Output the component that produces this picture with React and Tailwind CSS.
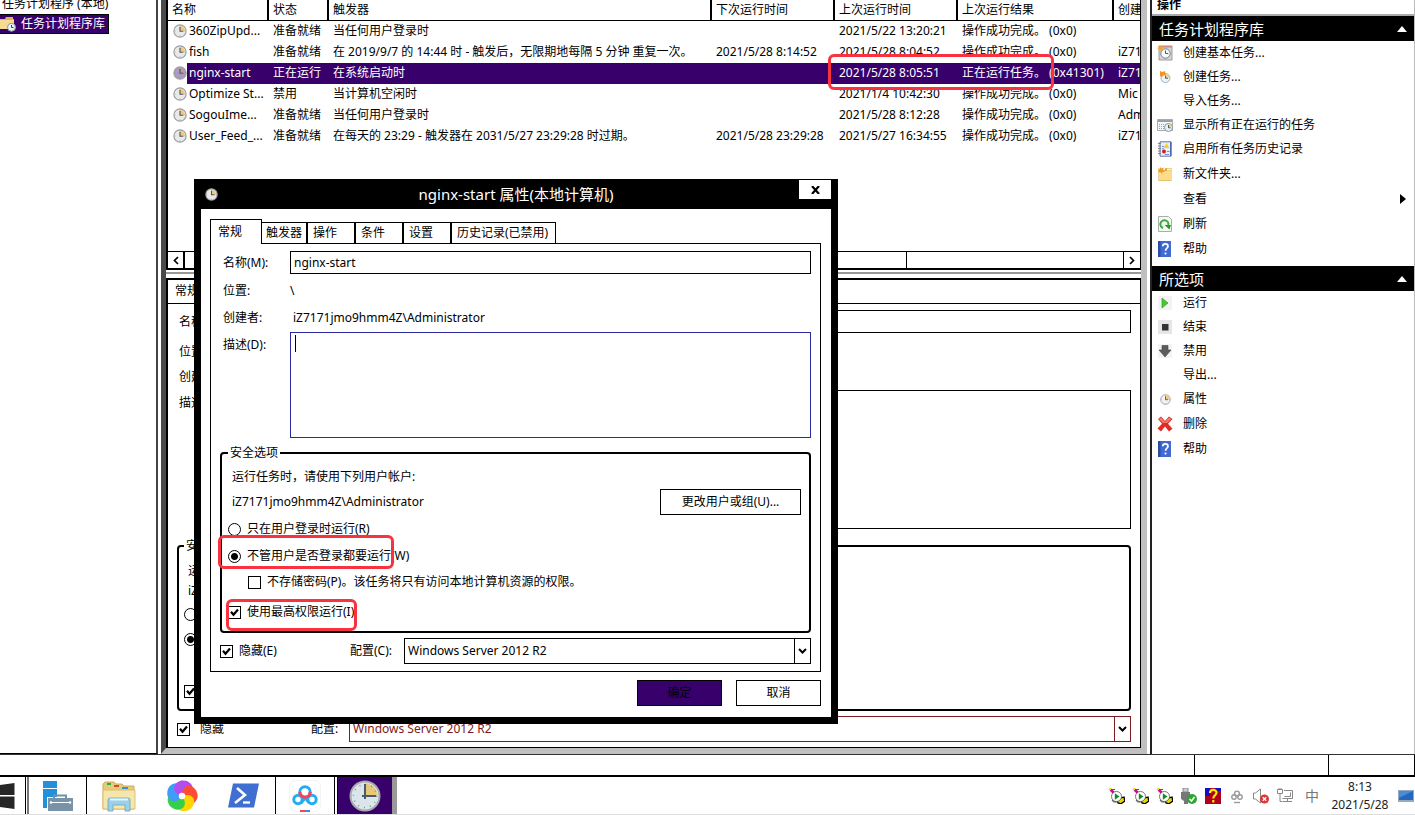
import React from "react";

function ClockIcon({ size = 14, tint = "#e9e9ea", wedge = "#f3c877" }) {
  return (
    <svg width={size} height={size} viewBox="0 0 16 16" className="shrink-0">
      <circle cx="8" cy="8" r="7" fill={tint} stroke="#9c9ea2" strokeWidth="1.3" />
      <path d="M8 8V2.4A5.6 5.6 0 0 1 13.6 8z" fill={wedge} />
      <path d="M8 3.4V8.3h3.8" fill="none" stroke="#4f5860" strokeWidth="1.3" />
      <path d="M8 1.8v1M8 13.2v1M1.8 8h1M13.2 8h1" stroke="#8a9098" strokeWidth=".8" />
    </svg>
  );
}

function FolderClock() {
  return (
    <svg width="16" height="16" viewBox="0 0 16 16" className="shrink-0">
      <path d="M0 3h5l1-2h7v2h1v10H0z" fill="#dfb65c" />
      <path d="M0 4h14v9H0z" fill="#f6dc90" />
      <circle cx="11.5" cy="11.3" r="4" fill="#eef2f6" stroke="#8794a3" />
      <path d="M11.5 9v2.5h2" fill="none" stroke="#345" />
    </svg>
  );
}

function BasicTaskIcon() {
  return (
    <svg width="16" height="16" viewBox="0 0 16 16">
      <path d="M2 1h13v14H2z" fill="#d9d4d0" stroke="#a39c98" />
      <path d="M2 1h13v1.500H2z" fill="#c98a80" />
      <circle cx="8.500" cy="8.500" r="4.700" fill="#f7fafc" stroke="#6d8494" />
      <path d="M8.500 5.500v3h2.800" fill="none" stroke="#425c6c" />
      <path d="M3 0l1 2 2-1-1 2 2 1-2 .6.6 2L4 5.400 2.500 7l.2-2.400L0 4l2-1L.5 1l2.200.8z" fill="#f6a52c" />
    </svg>
  );
}

function NewTaskIcon() {
  return (
    <svg width="16" height="16" viewBox="0 0 16 16">
      <circle cx="8.500" cy="9" r="4.500" fill="#edf4fa" stroke="#9db2c5" />
      <path d="M8.500 9V5A4 4 0 0 1 12.500 9z" fill="#f1cf84" />
      <path d="M8.500 6.500V9.300h2.500" fill="none" stroke="#4c6376" />
      <path d="M3 2l2.500 1 2.500-1 1 5-2-1-2 2-2-1z" fill="#f3961d" />
    </svg>
  );
}

function RunningIcon() {
  return (
    <svg width="16" height="16" viewBox="0 0 16 16">
      <path d="M.5 2.500h15v11H.5z" fill="#f3f4f5" stroke="#a7acb1" />
      <path d="M1 3h14v2H1z" fill="#9aa0a6" />
      <path d="M2 7.500h6M2 9.500h5M2 11.500h5" stroke="#9da3a8" strokeDasharray="1 1" />
      <circle cx="11.500" cy="10.500" r="4" fill="#eaf1f6" stroke="#8298a8" />
      <path d="M11.500 10.500V7a3.500 3.500 0 0 1 3.500 3.500z" fill="#f0d08b" />
      <path d="M11.500 8v2.800h2" fill="none" stroke="#435a6a" />
    </svg>
  );
}

function HistoryIcon() {
  return (
    <svg width="16" height="16" viewBox="0 0 16 16">
      <path d="M3 .8h11v14.400H3z" fill="#e8eefa" stroke="#5e77a8" />
      <path d="M13 1h1.500v14H13z" fill="#4a6bb0" />
      <path d="M1 2.500h3M1 5h3M1 7.500h3M1 10h3M1 12.500h3" stroke="#7a828e" />
      <path d="M9.500 2l2.800 5H6.800z" fill="#f7cf1e" />
      <path d="M5 5.500h2M5 7.800h2M8 13.500h4M10 10.500h2.500" stroke="#6f8fd0" />
      <circle cx="7" cy="10.500" r="2" fill="#cf2323" />
    </svg>
  );
}

function NewFolderIcon() {
  return (
    <svg width="16" height="16" viewBox="0 0 16 16">
      <path d="M1.500 4h6l1-2h6v13h-13z" fill="#d9aa45" />
      <path d="M2 5h13v9.500H2z" fill="#f9dc8c" />
      <path d="M10 2.500h4v2h-4z" fill="#fff4d0" />
      <path d="M3 1l1.500 1.500L7 1.500 6 4l2 1.500-2.500.5L5 8 3.500 6 1 6.500 2 4 .5 2.500l2.500.3z" fill="#f49a1d" />
    </svg>
  );
}

function RefreshIcon() {
  return (
    <svg width="16" height="16" viewBox="0 0 16 16">
      <path d="M1.500.5h10l3 3v12h-13z" fill="#f6f8f6" stroke="#a9adab" />
      <path d="M6 12A4 4 0 1 1 11.300 9" fill="none" stroke="#36ab35" strokeWidth="2" />
      <path d="M7.500 9h6.500l-1.500 4.500z" fill="#249b28" />
    </svg>
  );
}

function HelpIcon() {
  return (
    <svg width="16" height="16" viewBox="0 0 16 16">
      <path d="M1 0h13v16H1z" fill="#426bd0" />
      <path d="M1 0h2.500v16H1z" fill="#2a4da6" />
      <path d="M5.800 5.200c0-3.200 5.200-3.200 5.200 0 0 2-2.400 2-2.400 4.600" fill="none" stroke="#fff" strokeWidth="1.700" />
      <circle cx="8.500" cy="12.500" r="1.100" fill="#fff" />
    </svg>
  );
}

function RunIcon() {
  return (
    <svg width="16" height="16" viewBox="0 0 16 16">
      <path d="M1 1h14v14H1z" fill="#f3f3f3" />
      <path d="M5 3l6 5-6 5z" fill="#4fc436" stroke="#30a12a" strokeWidth=".7" />
    </svg>
  );
}

function EndIcon() {
  return (
    <svg width="16" height="16" viewBox="0 0 16 16">
      <path d="M1 1h14v14H1z" fill="#e6e6e6" />
      <path d="M5 5h6.500v6.500H5z" fill="#333" />
    </svg>
  );
}

function DisableIcon() {
  return (
    <svg width="16" height="16" viewBox="0 0 16 16">
      <path d="M1 1h14v14H1z" fill="#f3f3f3" />
      <path d="M5 2.500h6V7h3l-6 7-6-7h3z" fill="#5c5c5c" stroke="#444" strokeWidth=".6" />
    </svg>
  );
}

function DeleteIcon() {
  return (
    <svg width="16" height="16" viewBox="0 0 16 16">
      <path d="M1 3l3-2.500L8 5l4-4.500L15.500 3 11 7.800l4.500 5L12 15.500l-4-5-4 5-3.500-3L5 7.800z" fill="#e32b22" />
      <path d="M1.800 3L4 1.400 8 6l4-4.600L14.300 3 10 7H6z" fill="#f2796d" />
    </svg>
  );
}

function Chevron() {
  return (
    <svg width="9" height="6" viewBox="0 0 9 6">
      <path d="M1 1l3.500 3.500L8 1" fill="none" stroke="#000" strokeWidth="2" />
    </svg>
  );
}

function Tick({ id, label, checked, className = "", gap = "gap-1.5" }) {
  return (
    <div className={`flex items-center ${gap} ${className}`}>
      <span className="relative block size-[13px] shrink-0">
        <input
          id={id}
          type="checkbox"
          defaultChecked={checked}
          className="peer block size-[13px] appearance-none border border-black bg-white"
        />
        <svg
          viewBox="0 0 13 13"
          className="pointer-events-none absolute inset-0 hidden size-[13px] peer-checked:block"
        >
          <path d="M3 5.800l2.500 3L10 3.500" fill="none" stroke="#000" strokeWidth="2.200" />
        </svg>
      </span>
      <label htmlFor={id} className="whitespace-nowrap">
        {label}
      </label>
    </div>
  );
}

function Radio({ id, name, label, checked, className = "" }) {
  return (
    <div className={`flex items-center gap-1.5 ${className}`}>
      <input
        id={id}
        name={name}
        type="radio"
        defaultChecked={checked}
        className="size-[13px] shrink-0 appearance-none rounded-full border border-black bg-white checked:bg-[radial-gradient(circle,#000_3px,#fff_4px)]"
      />
      <label htmlFor={id} className="whitespace-nowrap">
        {label}
      </label>
    </div>
  );
}

function Combo({ id, tone = "border-black", text = "text-black" }) {
  return (
    <div className={`relative flex h-[26px] flex-1 border ${tone}`}>
      <select id={id} className={`w-full appearance-none bg-white pl-[3px] outline-none ${text}`}>
        <option>Windows Server 2012 R2</option>
      </select>
      <span
        className={`pointer-events-none absolute inset-y-0 right-0 grid w-4 place-items-center border-l bg-white ${tone}`}
      >
        <Chevron />
      </span>
    </div>
  );
}

const tasks = [
  ["360ZipUpd...", "准备就绪", "当任何用户登录时", "", "2021/5/22 13:20:21", "操作成功完成。 (0x0)", ""],
  ["fish", "准备就绪", "在 2019/9/7 的 14:44 时 - 触发后，无限期地每隔 5 分钟 重复一次。", "2021/5/28 8:14:52", "2021/5/28 8:04:52", "操作成功完成。 (0x0)", "iZ71"],
  ["nginx-start", "正在运行", "在系统启动时", "", "2021/5/28 8:05:51", "正在运行任务。 (0x41301)", "iZ71"],
  ["Optimize St...", "禁用", "当计算机空闲时", "", "2021/1/4 10:42:30", "操作成功完成。 (0x0)", "Mic"],
  ["SogouIme...", "准备就绪", "当任何用户登录时", "", "2021/5/28 8:12:28", "操作成功完成。 (0x0)", "Adm"],
  ["User_Feed_...", "准备就绪", "在每天的 23:29 - 触发器在 2031/5/27 23:29:28 时过期。", "2021/5/28 23:29:28", "2021/5/27 16:34:55", "操作成功完成。 (0x0)", "iZ71"],
];

const headings = ["名称", "状态", "触发器", "下次运行时间", "上次运行时间", "上次运行结果", "创建"];

function TaskList() {
  return (
    <section className="flex h-[270px] flex-col border-r border-b-2 border-l-2 border-black bg-white">
      <div className="flex-1 overflow-hidden">
        <table className="w-full table-fixed border-collapse text-left whitespace-nowrap">
          <colgroup>
            <col className="w-[100px]" />
            <col className="w-[60px]" />
            <col className="w-[383px]" />
            <col className="w-[123px]" />
            <col className="w-[123px]" />
            <col className="w-[156px]" />
            <col />
          </colgroup>
          <thead>
            <tr className="h-5 border-b border-black">
              {headings.map((h, i) => (
                <th
                  key={h}
                  className={`overflow-hidden py-0 pr-0 pl-1 font-normal ${i < 6 ? "border-r-2 border-black" : ""}`}
                >
                  {h}
                </th>
              ))}
            </tr>
          </thead>
          <tbody>
            {tasks.map((row, r) => {
              const on = r === 2;
              return (
                <tr key={row[0]} className={`h-[21px] ${on ? "text-white" : ""}`}>
                  {row.map((cell, i) =>
                    i === 0 ? (
                      <td key={i} className="overflow-hidden p-0">
                        <div className="flex h-[21px] items-center pl-[5px]">
                          <ClockIcon
                            tint={on ? "#a99bc4" : "#e9e9ea"}
                            wedge={on ? "#c09a9c" : "#f3c877"}
                          />
                          <span
                            className={`flex h-full flex-1 items-center pl-0.5 ${on ? "bg-[#38006b]" : ""}`}
                          >
                            {cell}
                          </span>
                        </div>
                      </td>
                    ) : (
                      <td
                        key={i}
                        className={`overflow-hidden py-0 pr-0 pl-[5px] ${on ? "bg-[#38006b]" : ""}`}
                      >
                        {cell}
                      </td>
                    )
                  )}
                </tr>
              );
            })}
          </tbody>
        </table>
      </div>
      <div className="flex h-[17px] border-t border-black">
        <button aria-label="向左滚动" className="grid w-[17px] place-items-center border-r-2 border-black">
          <svg width="6" height="9" viewBox="0 0 6 9">
            <path d="M5 1L1.500 4.500 5 8" fill="none" stroke="#000" strokeWidth="1.700" />
          </svg>
        </button>
        <div className="flex flex-1">
          <div className="w-[77%] border-r border-black" />
        </div>
        <button aria-label="向右滚动" className="grid w-[17px] place-items-center border-l border-black">
          <svg width="6" height="9" viewBox="0 0 6 9">
            <path d="M1 1l3.500 3.500L1 8" fill="none" stroke="#000" strokeWidth="1.700" />
          </svg>
        </button>
      </div>
    </section>
  );
}

function Details() {
  return (
    <section className="flex flex-1 flex-col border-t-2 border-r border-b border-l-2 border-black bg-white">
      <div className="h-[23px] pt-0.5 pl-[7px]">常规</div>
      <div className="flex-1 border-t border-black pt-1.5 pr-[9px] pl-[9px]">
        <div className="flex h-[23px] items-center">
          <label htmlFor="d-name" className="w-28 pl-0.5">名称:</label>
          <input id="d-name" readOnly className="h-full flex-1 border border-black px-1 outline-none" />
        </div>
        <div className="mt-[7px] flex h-6 items-center pl-0.5">位置:</div>
        <div className="flex h-[26px] items-center pl-0.5">创建者:</div>
        <div className="flex h-[139px]">
          <label htmlFor="d-desc" className="w-28 pt-1 pl-0.5">描述:</label>
          <textarea id="d-desc" readOnly className="h-full flex-1 resize-none border border-black outline-none" />
        </div>
        <fieldset className="mt-[9px] h-[173px] rounded border-2 border-black pl-[9px]">
          <legend className="-ml-1 h-4 px-0.5 leading-4">安全选项</legend>
          <div className="flex h-[26px] items-end">运行任务时，请使用下列用户帐户:</div>
          <div className="flex h-[22px] items-center">iZ7171jmo9hmm4Z\Administrator</div>
          <Radio id="d-r1" name="d-logon" label="只在用户登录时运行" className="-ml-1 h-6" />
          <Radio id="d-r2" name="d-logon" label="不管用户是否登录都要运行" checked className="-ml-1 h-[26px]" />
          <Tick id="d-pw" label="不存储密码" className="ml-4 h-6" />
          <Tick id="d-hi" label="使用最高权限运行" checked className="-ml-1 h-[30px]" />
        </fieldset>
        <div className="mt-[5px] mb-1 flex items-center">
          <Tick id="d-hide" label="隐藏" checked gap="gap-2.5" className="w-[134px]" />
          <label htmlFor="d-conf" className="w-[38px]">配置:</label>
          <Combo id="d-conf" tone="border-[#7b1c22]" text="text-[#7b1c22]" />
        </div>
      </div>
    </section>
  );
}

function Action({ icon, children, tall, arrow }) {
  return (
    <button className={`flex w-full items-center pl-[5px] text-left ${tall ? "h-[25px]" : "h-6"}`}>
      <span className="mr-[10px] grid size-4 place-items-center">{icon}</span>
      <span className="flex-1">{children}</span>
      {arrow && (
        <svg width="6" height="10" viewBox="0 0 6 10" className="mr-2">
          <path d="M0 0l6 5-6 5z" />
        </svg>
      )}
    </button>
  );
}

function ActionHeader({ children }) {
  return (
    <h2 className="flex h-[25px] items-center justify-between bg-black pr-[7px] pl-[7px] text-[15px] text-white">
      {children}
      <svg width="10" height="6" viewBox="0 0 10 6">
        <path d="M0 6l5-6 5 6z" fill="#fff" />
      </svg>
    </h2>
  );
}

function Actions() {
  return (
    <aside className="w-[265px] shrink-0 overflow-hidden border-r border-l-2 border-r-[#bbb] border-l-[#222] bg-white">
      <div className="flex h-4 items-end border-b-2 border-[#aaa] pl-[5px] leading-[18px] font-bold">操作</div>
      <ActionHeader>任务计划程序库</ActionHeader>
      <Action icon={<BasicTaskIcon />}>创建基本任务...</Action>
      <Action icon={<NewTaskIcon />}>创建任务...</Action>
      <Action>导入任务...</Action>
      <Action icon={<RunningIcon />}>显示所有正在运行的任务</Action>
      <Action icon={<HistoryIcon />}>启用所有任务历史记录</Action>
      <Action tall icon={<NewFolderIcon />}>新文件夹...</Action>
      <Action tall arrow>查看</Action>
      <Action tall icon={<RefreshIcon />}>刷新</Action>
      <Action tall icon={<HelpIcon />}>帮助</Action>
      <div className="mt-[5px]">
        <ActionHeader>所选项</ActionHeader>
      </div>
      <Action icon={<RunIcon />}>运行</Action>
      <Action icon={<EndIcon />}>结束</Action>
      <Action icon={<DisableIcon />}>禁用</Action>
      <Action>导出...</Action>
      <Action icon={<ClockIcon size={11} tint="#eef3f8" />}>属性</Action>
      <Action tall icon={<DeleteIcon />}>删除</Action>
      <Action tall icon={<HelpIcon />}>帮助</Action>
    </aside>
  );
}

function Dialog() {
  return (
    <div
      role="dialog"
      aria-labelledby="dialog-title"
      className="absolute top-[179px] left-[194px] w-[644px] border-x-[7px] border-b-[7px] border-black bg-white"
    >
      <div className="flex h-[30px] items-center bg-black text-white">
        <span className="flex w-8 pl-1">
          <ClockIcon size={13} />
        </span>
        <h1 id="dialog-title" className="flex-1 text-center text-[15px]">
          nginx-start 属性(本地计算机)
        </h1>
        <button aria-label="关闭" className="mt-px grid h-[19px] w-8 place-items-center self-start bg-white">
          <svg width="9" height="8" viewBox="0 0 9 8">
            <path d="M1 0l7 8M8 0L1 8" stroke="#000" strokeWidth="2.200" />
          </svg>
        </button>
      </div>
      <div className="pt-2.5 pr-2.5 pb-[11px] pl-[9px]">
        <div role="tablist" className="relative z-10 flex h-[25px] items-end">
          <button role="tab" aria-selected="true" className="h-full w-[52px] border border-b-0 border-black bg-white pl-[7px] text-left">
            常规
          </button>
          {[["触发器", "w-[46px] pl-1"], ["操作", "w-12 pl-[5px]"], ["条件", "w-12 pl-[5px]"], ["设置", "w-12 pl-[5px]"], ["历史记录(已禁用)", "w-[104px] pl-[5px]"]].map(
            ([t, c]) => (
              <button
                key={t}
                role="tab"
                className={`h-[22px] border-y border-r-2 border-black text-left whitespace-nowrap last:border-r ${c}`}
              >
                {t}
              </button>
            )
          )}
        </div>
        <div className="-mt-px border border-black px-[9px] pt-[7px] pb-[7px]">
          <div className="flex h-[23px] items-center">
            <label htmlFor="name" className="w-[70px] pl-[3px]">名称(M):</label>
            <input id="name" defaultValue="nginx-start" className="h-full flex-1 border border-black px-[3px] outline-none" />
          </div>
          <div className="mt-1 flex h-[26px] items-center">
            <span className="w-[70px] pl-[3px]">位置:</span>
            <span>\</span>
          </div>
          <div className="flex h-7 items-center">
            <span className="w-[73px] pl-[3px]">创建者:</span>
            <span>iZ7171jmo9hmm4Z\Administrator</span>
          </div>
          <div className="flex h-[106px]">
            <label htmlFor="desc" className="w-[70px] pt-1 pl-[3px]">描述(D):</label>
            <div className="relative flex-1">
              <textarea id="desc" className="block size-full resize-none border border-[#2a2aa0] px-1 py-0.5 outline-none" />
              <span className="absolute top-[3px] left-[5px] h-[17px] w-px bg-black" />
            </div>
          </div>
          <fieldset className="mt-[7px] h-[188px] rounded border-2 border-black pr-2 pl-1.5">
            <legend className="h-4 px-0.5 leading-4">安全选项</legend>
            <div className="mt-1 flex h-6 items-center pl-1">运行任务时，请使用下列用户帐户:</div>
            <div className="flex h-[26px] items-center justify-between pl-1">
              <span>iZ7171jmo9hmm4Z\Administrator</span>
              <button className="h-full w-[141px] border border-black">更改用户或组(U)...</button>
            </div>
            <Radio id="r1" name="logon" label="只在用户登录时运行(R)" className="h-7" />
            <Radio id="r2" name="logon" label="不管用户是否登录都要运行(W)" checked className="h-[26px]" />
            <Tick id="pw" label="不存储密码(P)。该任务将只有访问本地计算机资源的权限。" className="ml-5 h-[26px]" />
            <Tick id="hi" label="使用最高权限运行(I)" checked className="mt-1 h-[26px]" />
          </fieldset>
          <div className="mt-[5px] flex items-center">
            <Tick id="hide" label="隐藏(E)" checked className="w-[130px]" />
            <label htmlFor="conf" className="w-[54px]">配置(C):</label>
            <Combo id="conf" />
          </div>
        </div>
        <div className="mt-2 flex justify-end gap-3.5">
          <button className="h-[26px] w-[85px] border border-black bg-[#38006b]">确定</button>
          <button className="h-[26px] w-[85px] border border-black">取消</button>
        </div>
      </div>
    </div>
  );
}

function TrayApp() {
  return (
    <svg width="16" height="16" viewBox="0 0 16 16">
      <path d="M8 12l3-2 4-1 .8 4-3.800 2.800L9 15z" fill="#e8d800" stroke="#000" strokeWidth="1.300" />
      <circle cx="7.500" cy="8.500" r="5" fill="#fff" stroke="#555" strokeWidth=".8" />
      <path d="M5.800 5.200l4.700 3.300-4.700 3.300z" fill="#128a26" />
      <path d="M1.500 1.500l3 3" stroke="#c0147a" strokeWidth="2.600" />
      <path d="M3 1.500h3" stroke="#d81b60" strokeWidth="1" />
      <path d="M0 0h2v2H0z" fill="#f1e400" />
      <path d="M3 12l1.500 2h3" fill="none" stroke="#222" strokeWidth=".8" />
    </svg>
  );
}

function TaskButton({ label, className = "", children }) {
  return (
    <button aria-label={label} className={`grid shrink-0 place-items-center ${className}`}>
      {children}
    </button>
  );
}

const petals = ["#b44df0", "#ff4d33", "#ffd500", "#35d04a", "#3f9df8"];

function Taskbar() {
  return (
    <footer className="flex h-[38px] items-stretch border-b border-[#ddd] bg-white">
      <TaskButton label="开始" className="w-[26px] justify-items-start border-r border-black">
        <svg width="15" height="26" viewBox="0 0 15 26">
          <path d="M0 2l14.500-2v12H0zM0 13.500h14.500V26L0 24z" fill="#262626" />
        </svg>
      </TaskButton>
      <TaskButton label="服务器管理器" className="ml-px w-[60px] border-r border-l-2 border-r-black border-l-[#777]">
        <svg width="32" height="32" viewBox="0 0 32 32">
          <path d="M1 1h14v7H1zM1 9h14v19H1z" fill="#2390dc" />
          <path d="M5 17h27v14H5z" fill="#fff" />
          <path d="M12 18v-2.500h12V18" fill="none" stroke="#7590a5" strokeWidth="2" />
          <path d="M6 18h25v13H6z" fill="#7893a8" />
          <path d="M8 22.500h21" stroke="#fff" />
          <circle cx="9" cy="22.500" r="1.300" fill="#fff" />
          <circle cx="28" cy="22.500" r="1.300" fill="#fff" />
        </svg>
      </TaskButton>
      <TaskButton label="文件资源管理器" className="w-[64px]">
        <svg width="34" height="32" viewBox="0 0 34 32">
          <path d="M1 4l2-2h9l2 2h6l2 2h10v23H1z" fill="#e6cb7c" stroke="#c2a04c" strokeWidth=".8" />
          <path d="M5 3h4v2H5z" fill="#23b431" />
          <path d="M12 5h5v2h-5z" fill="#d44a2e" />
          <path d="M20 7h6v2h-6z" fill="#3a90dd" />
          <path d="M1 10h32v19H1z" fill="#f7e6a9" stroke="#d5b562" strokeWidth=".8" />
          <path d="M6 31V20q0-2 2-2h18q2 0 2 2v11h-5v-6H11v6z" fill="#9bd0ea" stroke="#68a3c4" strokeWidth=".8" />
          <path d="M8 19.500h18" stroke="#e4f6ff" strokeWidth="2" />
        </svg>
      </TaskButton>
      <TaskButton label="浏览器" className="w-[61px]">
        <svg width="32" height="32" viewBox="-16 -16 32 32">
          <circle r="10" fill="#3f9df8" />
          {petals.map((c, i) => (
            <path
              key={c}
              d="M0 0C-5-1-10-6-7-11-4-16 4-17 8-13 11-10 11-8 10-6 6-8 2-6 0 0z"
              fill={c}
              transform={`rotate(${i * 72})`}
            />
          ))}
          <path d="M0 0C-5-1-10-6-7-11-5-14-2-15.500 1-15.500-3-11-3-5 0 0z" fill="#b44df0" />
          <circle r="3.200" fill="#fff" />
        </svg>
      </TaskButton>
      <TaskButton label="PowerShell" className="w-[64px] border-r border-black">
        <svg width="31" height="25" viewBox="0 0 31 25">
          <path d="M5 .5h26L26 24.500H0z" fill="#3f6fd0" />
          <path d="M9 5l8 7-10 8" fill="none" stroke="#fff" strokeWidth="2.600" />
          <path d="M15 19.500h7" stroke="#fff" strokeWidth="2.300" />
        </svg>
      </TaskButton>
      <TaskButton label="网盘" className="w-[59px] border-r border-black">
        <svg width="32" height="34" viewBox="0 0 32 34">
          <rect x=".5" y="1.500" width="31" height="31" rx="6" fill="#fff" stroke="#f3f3f3" />
          <circle cx="9" cy="20.500" r="4.200" fill="none" stroke="#22aef5" strokeWidth="3" />
          <circle cx="23" cy="20.500" r="4.200" fill="none" stroke="#22aef5" strokeWidth="3" />
          <path d="M11.500 24.500L17 18" stroke="#22aef5" strokeWidth="3" />
          <path d="M20 23.500L15.500 18" stroke="#22aef5" strokeWidth="3" />
          <circle cx="16" cy="13" r="5.200" fill="none" stroke="#22aef5" strokeWidth="3" />
          <path d="M10.800 13a5.200 5.200 0 0 0 10.400 0" fill="none" stroke="#f0465a" strokeWidth="3" />
          <path d="M11 32h5" stroke="#f0465a" strokeWidth="2" />
          <path d="M16 32h5" stroke="#3b8af0" strokeWidth="2" />
        </svg>
      </TaskButton>
      <TaskButton label="任务计划程序" className="ml-0.5 w-[60px] border-r-[5px] border-l border-r-[#999] border-l-black bg-[#38006b]">
        <svg width="32" height="32" viewBox="0 0 32 32">
          <circle cx="16" cy="16" r="14.500" fill="#dbe5ec" stroke="#a8aaac" strokeWidth="2" />
          <path d="M16 16V3.500A12.500 12.500 0 0 1 28.500 16z" fill="#e9c779" />
          <circle cx="16" cy="16" r="11.500" fill="none" stroke="#7f93a3" strokeWidth="1.500" strokeDasharray="1 5.020" />
          <path d="M16 4v15M13 16h14" stroke="#4a5a66" strokeWidth="2" />
        </svg>
      </TaskButton>
      <div className="ml-auto flex items-center gap-2">
        <TrayApp />
        <TrayApp />
        <TrayApp />
        <svg width="16" height="16" viewBox="0 0 16 16">
          <path d="M2 0h5v4H2z" fill="#ccc" stroke="#888" />
          <path d="M0 4h9v7l-2 2v3H3v-3l-3-2z" fill="#777" />
          <circle cx="11" cy="11" r="5" fill="#2ea636" />
          <path d="M8.500 11l2 2 3-4" fill="none" stroke="#fff" strokeWidth="1.500" />
        </svg>
        <svg width="16" height="16" viewBox="0 0 16 16">
          <path d="M0 0h16v16H0z" fill="#b1001c" />
          <path d="M0 0h5v8H0zM10 0h6v3h-6z" fill="#1010c8" />
          <path d="M5 5c0-4 6.500-4 6.500-.5C11.500 7.500 8.300 7 8.300 10.500M8.300 12v2.500" fill="none" stroke="#ffea00" strokeWidth="2.200" />
        </svg>
        <svg width="16" height="16" viewBox="0 0 16 16" fill="none" stroke="#999" strokeWidth="1.400">
          <circle cx="5" cy="9" r="2.200" />
          <circle cx="11" cy="9" r="2.200" />
          <circle cx="8" cy="5.500" r="2.400" />
          <path d="M5 14.500h6" />
        </svg>
        <svg width="16" height="16" viewBox="0 0 16 16" fill="none" stroke="#888">
          <path d="M.5 5h2l5-4v14l-5-4h-2z" />
          <circle cx="11.500" cy="11" r="4.500" fill="#df3535" stroke="none" />
          <path d="M9.800 9.300l3.400 3.400M13.200 9.300l-3.400 3.400" stroke="#fff" strokeWidth="1.300" />
        </svg>
        <svg width="16" height="16" viewBox="0 0 16 16" fill="none" stroke="#888">
          <path d="M7 2.500h8.500v8H5.500M10.500 10.500v3M6 13.500h9M13.500 4.500v4h-6" />
          <path d="M.5 1.500h5v4h-5zM3 5.500v8h2.500M2 0v1.500M4 0v1.500" />
        </svg>
        <span className="ml-1 text-[14px] leading-4 text-[#777]">中</span>
        <time className="ml-[3px] flex w-[60px] flex-col text-center leading-[18px] text-[#222]">
          <span>8:13</span>
          <span>2021/5/28</span>
        </time>
        <svg width="16" height="12" viewBox="0 0 16 12" className="mr-px">
          <path d="M0 0h16v12H0z" fill="#96a9bd" />
          <path d="M1 1h14v9H1z" fill="#2467bd" />
          <path d="M1 1h14L1 8z" fill="#498cdb" />
        </svg>
      </div>
    </footer>
  );
}

export default function App() {
  return (
    <div className="relative flex min-h-screen flex-col overflow-hidden bg-white font-['Noto_Sans','Noto_Sans_CJK_SC',sans-serif] text-[12px] leading-[18px] text-black">
      <main className="flex flex-1">
        <nav className="w-[158px] shrink-0 overflow-hidden border-r-2 border-b border-r-[#444] border-b-black">
          <div className="-mt-1 h-[18px] pl-0.5 leading-4">任务计划程序 (本地)</div>
          <a href="#library" className="inline-flex h-5 items-center gap-[5px] border border-l-0 border-black bg-[#38006b] pr-[3px] text-white">
            <FolderClock />
            任务计划程序库
          </a>
        </nav>
        <div className="mx-[3px] flex min-w-0 flex-1 flex-col border-r-[6px] border-b-[6px] border-l-[5px] border-r-[#c0c0c0] border-b-[#c0c0c0] border-l-[#4a4a4a]">
          <TaskList />
          <div className="mt-0.5 mb-1 h-0.5 bg-[#999]" />
          <Details />
        </div>
        <Actions />
      </main>
      <div className="flex h-[23px] justify-end border-t border-b-2 border-t-[#333] border-b-black">
        <div className="w-[134px] border-l border-black" />
        <div className="w-[87px] border-r border-l border-black" />
      </div>
      <Taskbar />
      <Dialog />
      <div className="pointer-events-none absolute top-[54px] left-[828px] h-9 w-[226px] rounded-md border-[3px] border-[#f8333f]" />
      <div className="pointer-events-none absolute top-[535px] left-[218px] h-[34px] w-[176px] rounded-md border-[3px] border-[#f8333f]" />
      <div className="pointer-events-none absolute top-[599px] left-[226px] h-8 w-[131px] rounded-md border-[3px] border-[#f8333f]" />
    </div>
  );
}
